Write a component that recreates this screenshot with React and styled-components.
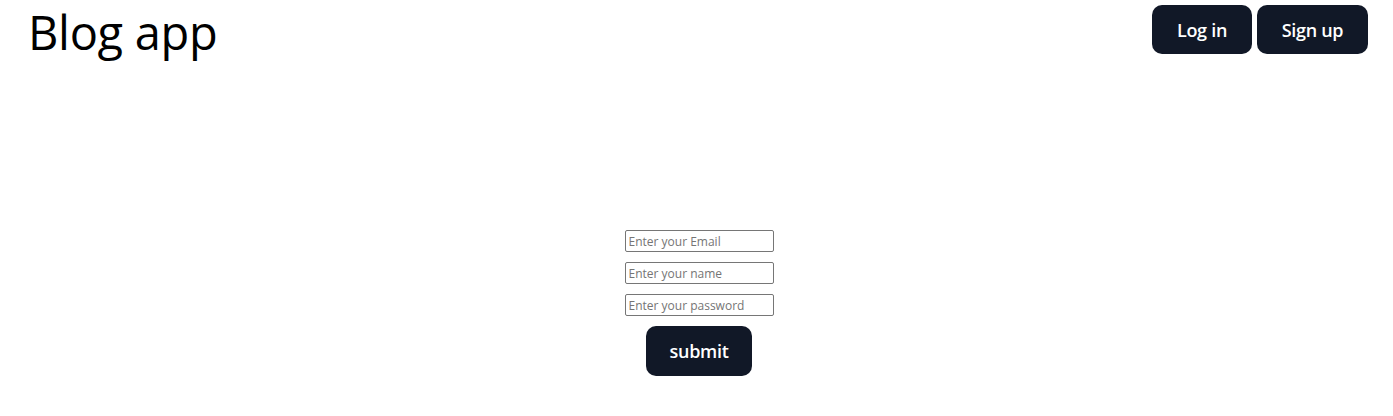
import React from 'react';
import styled, { createGlobalStyle } from 'styled-components';

const GlobalStyle = createGlobalStyle`
    html, body {
        margin: 0;
        padding: 0;
        background: #ffffff;
        font-family: "Open Sans", "Noto Sans", sans-serif;
    }
`;

const Page = styled.div`
    display: flex;
    flex-direction: column;
    width: 100%;
    min-height: 416px;
`;

const Header = styled.header`
    display: flex;
    justify-content: space-between;
    align-items: flex-start;
    padding: 5px 25px 0 28px;
`;

const Title = styled.h1`
    margin: 0;
    font-family: "Open Sans", sans-serif;
    font-weight: 400;
    font-size: 47px;
    line-height: 60px;
    letter-spacing: -0.3px;
    color: #000000;
    transform: translateY(-3px);
`;

const Actions = styled.nav`
    display: flex;
    gap: 5px;
`;

const DarkButton = styled.button`
    display: inline-flex;
    align-items: center;
    justify-content: center;
    box-sizing: border-box;
    width: ${props => props.width}px;
    height: ${props => props.height || 49}px;
    padding: 0;
    border: none;
    border-radius: 10px;
    background: #111827;
    color: #ffffff;
    font-family: "Open Sans", sans-serif;
    font-size: 18px;
    font-weight: 600;
    letter-spacing: -0.3px;
    cursor: pointer;
`;

const Form = styled.form`
    display: flex;
    flex-direction: column;
    align-items: center;
    gap: 10px;
    margin-top: 165px;
    padding-left: 5px;
`;

const Input = styled.input`
    box-sizing: border-box;
    width: 149px;
    height: 22px;
    margin: 0;
    padding: 1px 3px;
    border: 1px solid #767676;
    border-radius: 2px;
    font-family: "Open Sans", sans-serif;
    font-size: 12px;
    color: #000;

    &::placeholder {
        color: #757575;
    }
`;

const App = () => {
    return (
        <Page>
            <GlobalStyle />
            <Header>
                <Title>Blog app</Title>
                <Actions>
                    <DarkButton width={100}>Log in</DarkButton>
                    <DarkButton width={111}>Sign up</DarkButton>
                </Actions>
            </Header>
            <Form onSubmit={e => e.preventDefault()}>
                <Input type="email" placeholder="Enter your Email" />
                <Input type="text" placeholder="Enter your name" />
                <Input type="password" placeholder="Enter your password" />
                <DarkButton type="submit" width={106} height={50}>submit</DarkButton>
            </Form>
        </Page>
    );
};

export default App;
